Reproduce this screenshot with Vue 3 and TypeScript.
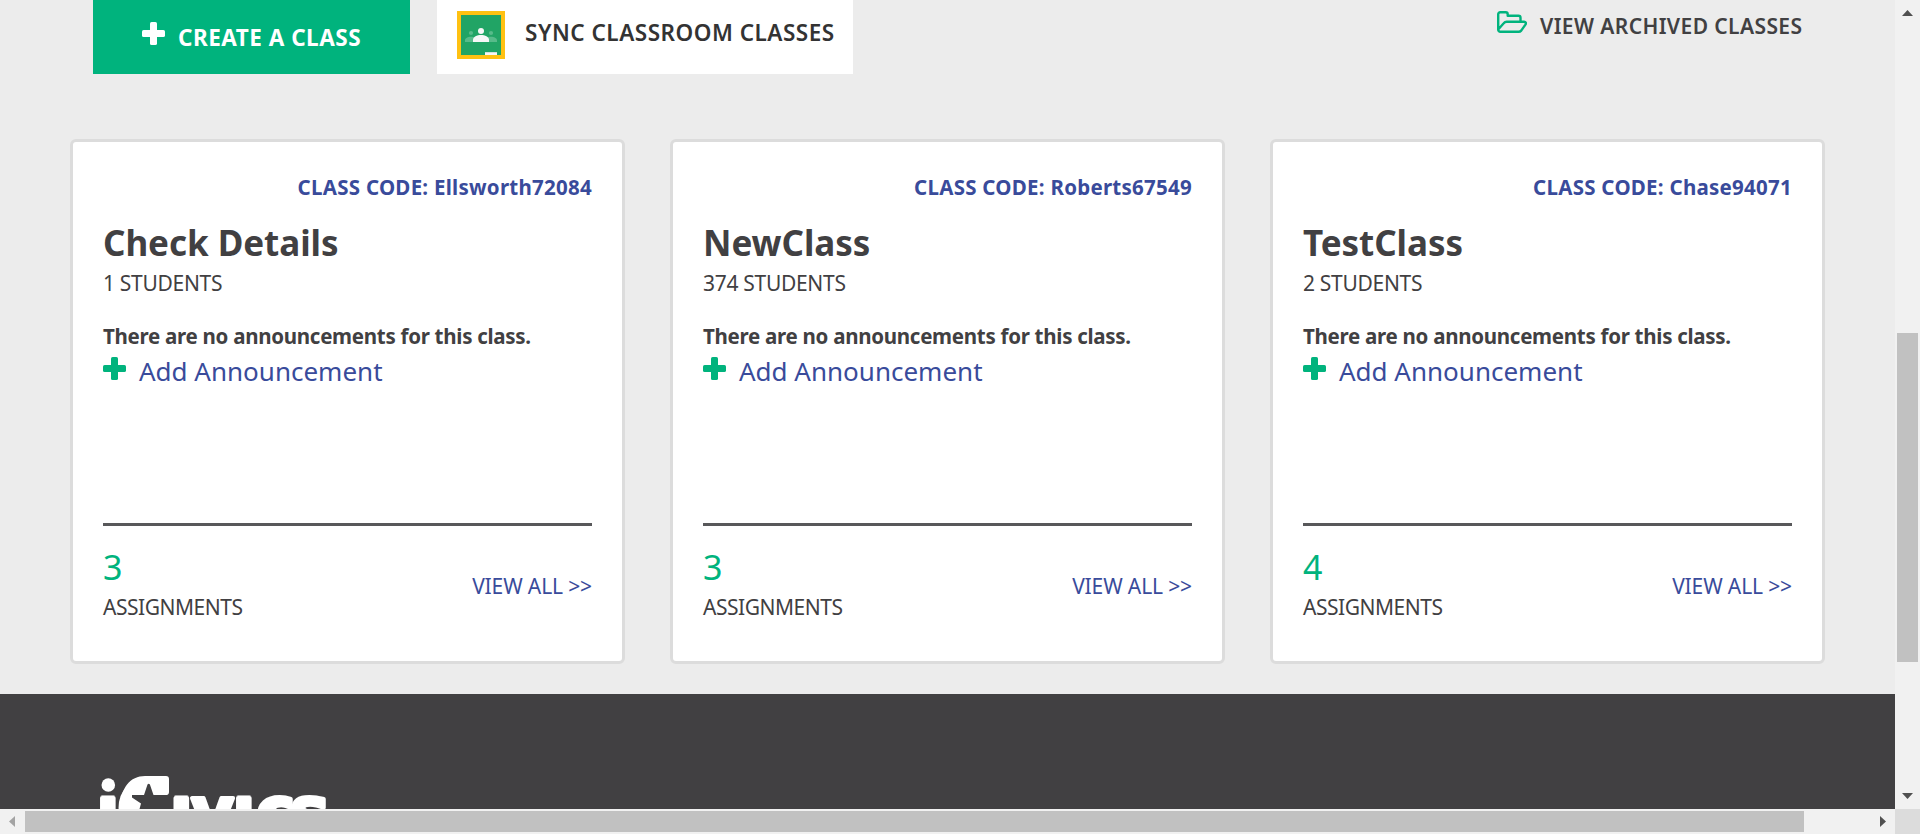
<script setup lang="ts">
interface ClassCard {
  code: string
  name: string
  students: number
  assignments: number
}

const classes: ClassCard[] = [
  { code: 'Ellsworth72084', name: 'Check Details', students: 1, assignments: 3 },
  { code: 'Roberts67549', name: 'NewClass', students: 374, assignments: 3 },
  { code: 'Chase94071', name: 'TestClass', students: 2, assignments: 4 },
]
</script>

<template>
  <div class="window">
    <div class="viewport">
      <div class="page">
        <header class="toolbar">
          <button class="btn create">
            <svg class="plus" viewBox="0 0 23 23">
              <rect x="8" y="0" width="7" height="23" rx="1.6" />
              <rect x="0" y="8" width="23" height="7" rx="1.6" />
            </svg>
            <span>CREATE A CLASS</span>
          </button>
          <button class="btn sync">
            <svg class="classroom" viewBox="0 0 48 48">
              <rect width="48" height="48" fill="#ffc112" />
              <rect x="4" y="4" width="40" height="40" fill="#21a465" />
              <g fill="#57bb8a">
                <circle cx="14" cy="22" r="2.1" />
                <circle cx="34" cy="22" r="2.1" />
                <path d="M8 31v-1.700c0-2.200 3-3.600 6-3.600s6 1.400 6 3.600V31zM28 31v-1.700c0-2.200 3-3.600 6-3.600s6 1.400 6 3.600V31z" />
              </g>
              <g fill="#f7f7f7">
                <circle cx="24" cy="20" r="3" />
                <path d="M16 31v-2c0-3.200 4-5 8-5s8 1.800 8 5v2z" />
                <rect x="28" y="41" width="12" height="3" />
              </g>
              <rect x="28" y="41" width="12" height="1" fill="#d5e3db" />
            </svg>
            <span>SYNC CLASSROOM CLASSES</span>
          </button>
          <a class="archived">
            <svg class="folder" viewBox="0 0 30 22">
              <path
                d="M1.200 18.500V3.200a2 2 0 0 1 2-2h5.500a2 2 0 0 1 2 2v1.600h10.800a2 2 0 0 1 2 2v4M1.200 18.500a2.200 2.200 0 0 0 2.300 2.300h18.200c1 0 1.800-.4 2.500-1.200l4.200-6c1-1.500.4-2.800-1.400-2.800H9.700c-1.300 0-2.200.5-3 1.500z"
              />
            </svg>
            <span>VIEW ARCHIVED CLASSES</span>
          </a>
        </header>

        <main class="cards">
          <article v-for="c in classes" :key="c.code" class="card">
            <div class="code">CLASS CODE: {{ c.code }}</div>
            <h2 class="name">{{ c.name }}</h2>
            <div class="caps">{{ c.students }} STUDENTS</div>
            <p class="notice">There are no announcements for this class.</p>
            <a class="add">
              <svg class="plus" viewBox="0 0 23 23">
                <rect x="8" y="0" width="7" height="23" rx="1.6" />
                <rect x="0" y="8" width="23" height="7" rx="1.6" />
              </svg>
              <span>Add Announcement</span>
            </a>
            <div class="summary">
              <div>
                <div class="count">{{ c.assignments }}</div>
                <div class="caps tight">ASSIGNMENTS</div>
              </div>
              <a class="all">VIEW ALL &gt;&gt;</a>
            </div>
          </article>
        </main>

        <footer class="footer">
          <svg class="logo" viewBox="0 0 240 80">
            <defs>
              <clipPath id="lowercase"><rect x="0" y="19" width="240" height="61" /></clipPath>
            </defs>
            <circle cx="8.300" cy="9" r="6.800" />
            <g clip-path="url(#lowercase)">
              <text class="mark" y="58" x="-3.500">i</text>
              <text class="mark" y="58" x="70 91 132.500 156 190">ivics</text>
            </g>
            <text class="mark big" x="17" y="58">C</text>
            <path d="M20 34C20 12 30 0 45 0H66a3 3 0 0 1 3 3V16a3 3 0 0 1-3 3H50L42 34z" />
            <path class="star" d="M47.500 8.500q1.200-1.500 2.400 0L53.500 19H72v22H41l-1.500-8 1.500-5.500L32 21.500V19H44z" />
          </svg>
        </footer>
      </div>
      <div class="vbar">
        <svg class="arrow" viewBox="0 0 11 6"><path d="M0 6L5.500 0L11 6z" /></svg>
        <div class="vthumb"></div>
        <svg class="arrow" viewBox="0 0 11 6"><path d="M0 0L5.500 6L11 0z" /></svg>
      </div>
    </div>
    <div class="bottom">
      <div class="hbar">
        <svg class="harrow faded" viewBox="0 0 6 11"><path d="M6 0L0 5.500L6 11z" /></svg>
        <div class="hthumb"></div>
        <svg class="harrow" viewBox="0 0 6 11"><path d="M0 0L6 5.500L0 11z" /></svg>
      </div>
      <div class="corner"></div>
    </div>
  </div>
</template>

<style>
body {
  margin: 0;
  overflow: hidden;
}
</style>

<style scoped>
.window {
  width: 1920px;
  height: 834px;
  display: flex;
  flex-direction: column;
  overflow: hidden;
  font-family: 'Noto Sans', 'Open Sans', sans-serif;
  color: #414042;
}
.window * {
  box-sizing: border-box;
}
svg {
  display: block;
  flex: none;
}
.viewport {
  display: flex;
  height: 809px;
}
.page {
  width: 1895px;
  height: 809px;
  background: #ececec;
  overflow: hidden;
  display: flex;
  flex-direction: column;
}
.toolbar {
  display: flex;
  align-items: flex-start;
  height: 74px;
  padding-left: 93px;
  white-space: nowrap;
}
.btn {
  display: flex;
  align-items: flex-start;
  height: 74px;
  border: 0;
  margin: 0;
  font: 700 22px/30px 'Noto Sans', 'Open Sans', sans-serif;
}
.create {
  width: 317px;
  padding: 22px 0 0 49px;
  gap: 13px;
  background: #00b37d;
  color: #fff;
  font-size: 22.5px;
  letter-spacing: 0.5px;
}
.create span {
  margin-top: 1px;
}
.create .plus {
  fill: #fff;
}
.plus {
  width: 23px;
  height: 23px;
  fill: #00b37d;
}
.sync {
  width: 416px;
  margin-left: 27px;
  padding: 11px 0 0 20px;
  gap: 20px;
  background: #fff;
  color: #333;
  font-size: 22.5px;
  font-weight: 650;
  letter-spacing: 0.5px;
}
.sync span {
  margin-top: 7px;
}
.classroom {
  width: 48px;
  height: 48px;
}
.archived {
  display: flex;
  gap: 13px;
  margin-left: 644px;
  padding-top: 11px;
  font-size: 21px;
  line-height: 30px;
  font-weight: 650;
  letter-spacing: 0.4px;
}
.folder {
  width: 30px;
  height: 22px;
  fill: none;
  stroke: #00b37d;
  stroke-width: 2.4;
  stroke-linejoin: round;
}
.cards {
  display: flex;
  gap: 45px;
  padding: 65px 0 0 70px;
}
.card {
  width: 555px;
  height: 525px;
  flex: none;
  display: flex;
  flex-direction: column;
  padding: 30px 30px 40px;
  border: 3px solid #dcdcdc;
  border-radius: 6px;
  background: #fff;
  white-space: nowrap;
}
.code {
  font-size: 20.5px;
  line-height: 30px;
  font-weight: 700;
  letter-spacing: 0.26px;
  text-align: right;
  color: #394b9b;
}
.name {
  margin: 19px 0 4px;
  font-size: 35px;
  line-height: 44px;
  font-weight: 700;
  letter-spacing: -0.05px;
}
.caps {
  font-size: 21px;
  line-height: 28px;
  letter-spacing: -0.3px;
}
.caps.tight {
  margin-top: 4px;
  letter-spacing: -0.47px;
}
.notice {
  margin: 24px 0 2px;
  font-size: 20.5px;
  line-height: 30px;
  font-weight: 700;
  letter-spacing: -0.28px;
}
.add {
  display: flex;
  gap: 13px;
  font-size: 26px;
  line-height: 36px;
  letter-spacing: 0;
  color: #394b9b;
}
.add .plus {
  margin-top: 4px;
}
.summary {
  display: flex;
  justify-content: space-between;
  align-items: flex-start;
  margin-top: auto;
  padding-top: 19px;
  border-top: 3px solid #58585a;
}
.count {
  font-size: 34px;
  line-height: 44px;
  color: #00b37d;
}
.all {
  margin-top: 27px;
  font-size: 21px;
  line-height: 28px;
  letter-spacing: -0.13px;
  color: #394b9b;
}
.footer {
  margin-top: 30px;
  flex: 1;
  min-height: 0;
  padding: 82px 0 0 100px;
  background: #414042;
  overflow: hidden;
}
.logo {
  width: 240px;
  height: 80px;
  fill: #fff;
}
.mark {
  font: 700 66px 'DejaVu Sans', sans-serif;
  stroke: #fff;
  stroke-width: 4;
  stroke-linejoin: round;
}
.mark.big {
  font-size: 72px;
}
.star {
  fill: #414042;
}
.vbar {
  width: 25px;
  height: 809px;
  padding: 10px 0 10px;
  display: flex;
  flex-direction: column;
  align-items: center;
  background: #f1f1f1;
}
.arrow {
  width: 11px;
  height: 6px;
  fill: #505050;
}
.vthumb {
  width: 21px;
  height: 329px;
  margin: 317px 0 131px;
  background: #c1c1c1;
}
.bottom {
  display: flex;
  height: 25px;
}
.hbar {
  width: 1895px;
  display: flex;
  align-items: center;
  background: #f1f1f1;
}
.harrow {
  width: 6px;
  height: 11px;
  margin-left: 76px;
  fill: #505050;
}
.harrow.faded {
  margin-left: 9px;
  fill: #a3a3a3;
}
.hthumb {
  width: 1779px;
  height: 21px;
  margin-left: 10px;
  background: #c1c1c1;
}
.corner {
  width: 25px;
  background: #dcdcdc;
}
</style>
